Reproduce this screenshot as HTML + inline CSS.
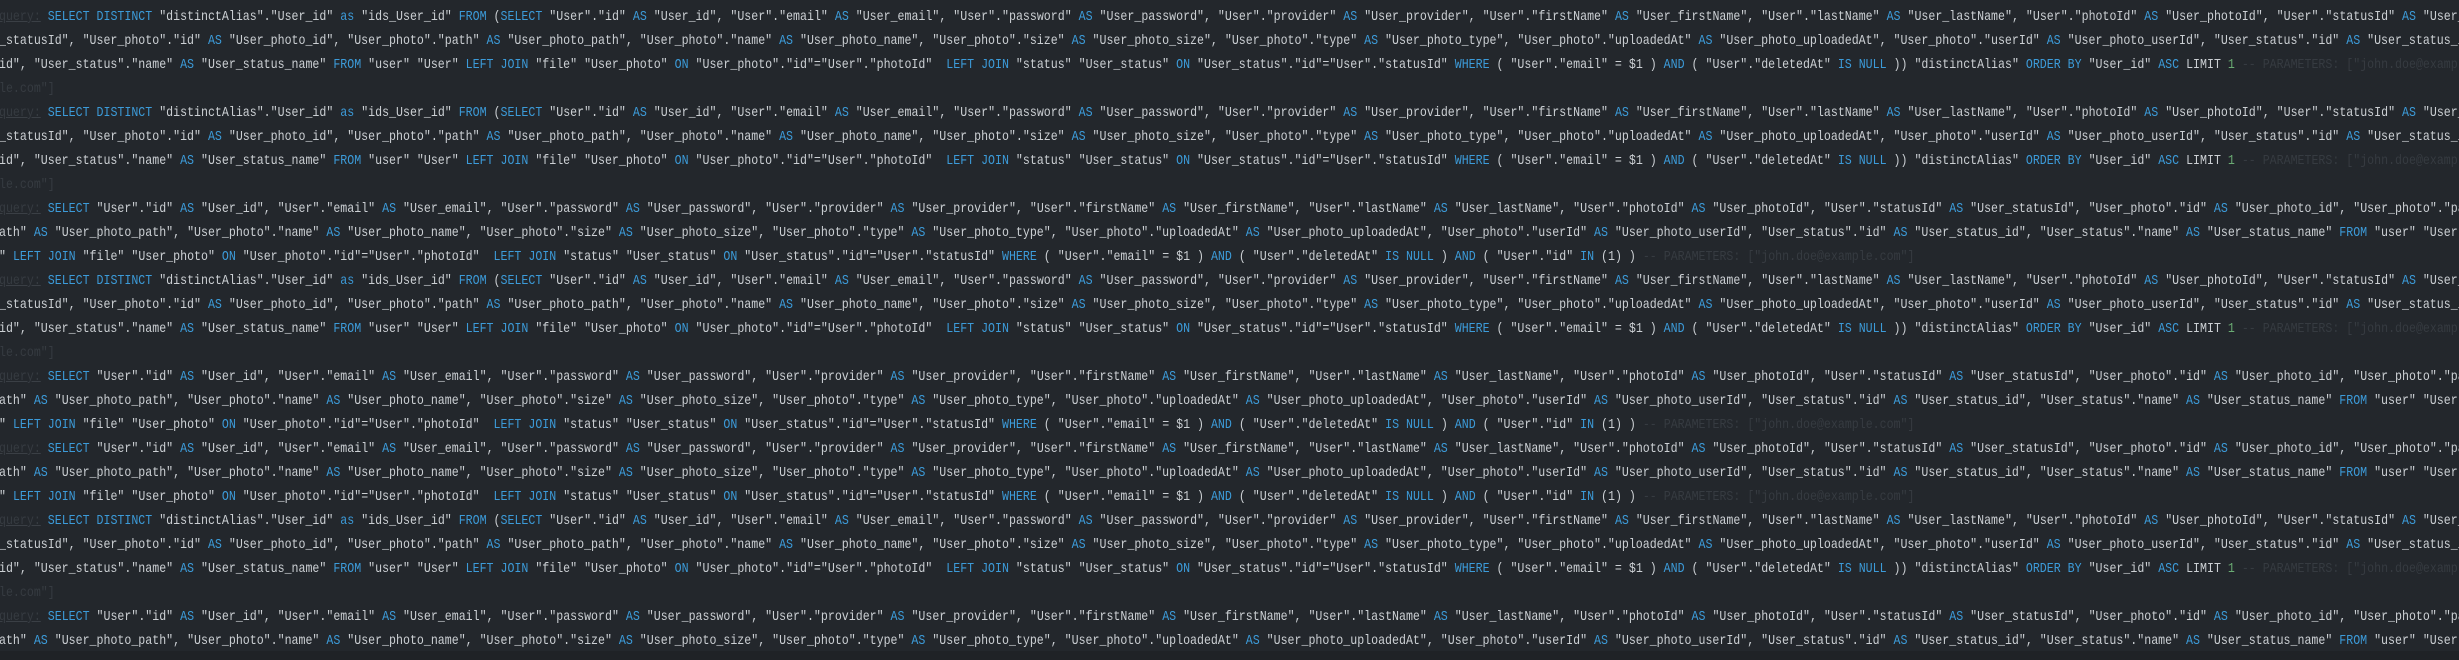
<!DOCTYPE html>
<html><head><meta charset="utf-8"><style>
html,body{margin:0;padding:0;background:#23272c;width:2459px;height:660px;overflow:hidden}
#w{position:absolute;left:-1px;top:5px;transform:scaleX(0.829);transform-origin:0 0;width:3400px;font-family:"Liberation Mono",monospace;font-size:14px;color:#ccd0d4}
.l{height:24px;line-height:24px;white-space:pre;overflow:hidden}
b{font-weight:normal;color:#3c9bd9}
i{font-style:normal;color:#363b41}
u{text-decoration:none;color:#6aab73}
.q{text-decoration:underline;text-decoration-color:#3a3f45}
#bar{position:absolute;left:0;top:651px;width:2459px;height:9px;background:#1f2226}
</style></head><body><div id="w">
<div class="l"><i class="q">query:</i> <b>SELECT DISTINCT</b> "distinctAlias"."User_id" <b>as</b> "ids_User_id" <b>FROM</b> (<b>SELECT</b> "User"."id" <b>AS</b> "User_id", "User"."email" <b>AS</b> "User_email", "User"."password" <b>AS</b> "User_password", "User"."provider" <b>AS</b> "User_provider", "User"."firstName" <b>AS</b> "User_firstName", "User"."lastName" <b>AS</b> "User_lastName", "User"."photoId" <b>AS</b> "User_photoId", "User"."statusId" <b>AS</b> "User_statusId"</div>
<div class="l">_statusId", "User_photo"."id" <b>AS</b> "User_photo_id", "User_photo"."path" <b>AS</b> "User_photo_path", "User_photo"."name" <b>AS</b> "User_photo_name", "User_photo"."size" <b>AS</b> "User_photo_size", "User_photo"."type" <b>AS</b> "User_photo_type", "User_photo"."uploadedAt" <b>AS</b> "User_photo_uploadedAt", "User_photo"."userId" <b>AS</b> "User_photo_userId", "User_status"."id" <b>AS</b> "User_status_id"</div>
<div class="l">id", "User_status"."name" <b>AS</b> "User_status_name" <b>FROM</b> "user" "User" <b>LEFT JOIN</b> "file" "User_photo" <b>ON</b> "User_photo"."id"="User"."photoId"  <b>LEFT JOIN</b> "status" "User_status" <b>ON</b> "User_status"."id"="User"."statusId" <b>WHERE</b> ( "User"."email" = $1 ) <b>AND</b> ( "User"."deletedAt" <b>IS NULL</b> )) "distinctAlias" <b>ORDER BY</b> "User_id" <b>ASC</b> LIMIT <u>1</u> <i>-- PARAMETERS: ["john.doe@example.com"]</i></div>
<div class="l"><i>le.com"]</i></div>
<div class="l"><i class="q">query:</i> <b>SELECT DISTINCT</b> "distinctAlias"."User_id" <b>as</b> "ids_User_id" <b>FROM</b> (<b>SELECT</b> "User"."id" <b>AS</b> "User_id", "User"."email" <b>AS</b> "User_email", "User"."password" <b>AS</b> "User_password", "User"."provider" <b>AS</b> "User_provider", "User"."firstName" <b>AS</b> "User_firstName", "User"."lastName" <b>AS</b> "User_lastName", "User"."photoId" <b>AS</b> "User_photoId", "User"."statusId" <b>AS</b> "User_statusId"</div>
<div class="l">_statusId", "User_photo"."id" <b>AS</b> "User_photo_id", "User_photo"."path" <b>AS</b> "User_photo_path", "User_photo"."name" <b>AS</b> "User_photo_name", "User_photo"."size" <b>AS</b> "User_photo_size", "User_photo"."type" <b>AS</b> "User_photo_type", "User_photo"."uploadedAt" <b>AS</b> "User_photo_uploadedAt", "User_photo"."userId" <b>AS</b> "User_photo_userId", "User_status"."id" <b>AS</b> "User_status_id"</div>
<div class="l">id", "User_status"."name" <b>AS</b> "User_status_name" <b>FROM</b> "user" "User" <b>LEFT JOIN</b> "file" "User_photo" <b>ON</b> "User_photo"."id"="User"."photoId"  <b>LEFT JOIN</b> "status" "User_status" <b>ON</b> "User_status"."id"="User"."statusId" <b>WHERE</b> ( "User"."email" = $1 ) <b>AND</b> ( "User"."deletedAt" <b>IS NULL</b> )) "distinctAlias" <b>ORDER BY</b> "User_id" <b>ASC</b> LIMIT <u>1</u> <i>-- PARAMETERS: ["john.doe@example.com"]</i></div>
<div class="l"><i>le.com"]</i></div>
<div class="l"><i class="q">query:</i> <b>SELECT</b> "User"."id" <b>AS</b> "User_id", "User"."email" <b>AS</b> "User_email", "User"."password" <b>AS</b> "User_password", "User"."provider" <b>AS</b> "User_provider", "User"."firstName" <b>AS</b> "User_firstName", "User"."lastName" <b>AS</b> "User_lastName", "User"."photoId" <b>AS</b> "User_photoId", "User"."statusId" <b>AS</b> "User_statusId", "User_photo"."id" <b>AS</b> "User_photo_id", "User_photo"."path"</div>
<div class="l">ath" <b>AS</b> "User_photo_path", "User_photo"."name" <b>AS</b> "User_photo_name", "User_photo"."size" <b>AS</b> "User_photo_size", "User_photo"."type" <b>AS</b> "User_photo_type", "User_photo"."uploadedAt" <b>AS</b> "User_photo_uploadedAt", "User_photo"."userId" <b>AS</b> "User_photo_userId", "User_status"."id" <b>AS</b> "User_status_id", "User_status"."name" <b>AS</b> "User_status_name" <b>FROM</b> "user" "User"</div>
<div class="l">" <b>LEFT JOIN</b> "file" "User_photo" <b>ON</b> "User_photo"."id"="User"."photoId"  <b>LEFT JOIN</b> "status" "User_status" <b>ON</b> "User_status"."id"="User"."statusId" <b>WHERE</b> ( "User"."email" = $1 ) <b>AND</b> ( "User"."deletedAt" <b>IS NULL</b> ) <b>AND</b> ( "User"."id" <b>IN</b> (1) ) <i>-- PARAMETERS: ["john.doe@example.com"]</i></div>
<div class="l"><i class="q">query:</i> <b>SELECT DISTINCT</b> "distinctAlias"."User_id" <b>as</b> "ids_User_id" <b>FROM</b> (<b>SELECT</b> "User"."id" <b>AS</b> "User_id", "User"."email" <b>AS</b> "User_email", "User"."password" <b>AS</b> "User_password", "User"."provider" <b>AS</b> "User_provider", "User"."firstName" <b>AS</b> "User_firstName", "User"."lastName" <b>AS</b> "User_lastName", "User"."photoId" <b>AS</b> "User_photoId", "User"."statusId" <b>AS</b> "User_statusId"</div>
<div class="l">_statusId", "User_photo"."id" <b>AS</b> "User_photo_id", "User_photo"."path" <b>AS</b> "User_photo_path", "User_photo"."name" <b>AS</b> "User_photo_name", "User_photo"."size" <b>AS</b> "User_photo_size", "User_photo"."type" <b>AS</b> "User_photo_type", "User_photo"."uploadedAt" <b>AS</b> "User_photo_uploadedAt", "User_photo"."userId" <b>AS</b> "User_photo_userId", "User_status"."id" <b>AS</b> "User_status_id"</div>
<div class="l">id", "User_status"."name" <b>AS</b> "User_status_name" <b>FROM</b> "user" "User" <b>LEFT JOIN</b> "file" "User_photo" <b>ON</b> "User_photo"."id"="User"."photoId"  <b>LEFT JOIN</b> "status" "User_status" <b>ON</b> "User_status"."id"="User"."statusId" <b>WHERE</b> ( "User"."email" = $1 ) <b>AND</b> ( "User"."deletedAt" <b>IS NULL</b> )) "distinctAlias" <b>ORDER BY</b> "User_id" <b>ASC</b> LIMIT <u>1</u> <i>-- PARAMETERS: ["john.doe@example.com"]</i></div>
<div class="l"><i>le.com"]</i></div>
<div class="l"><i class="q">query:</i> <b>SELECT</b> "User"."id" <b>AS</b> "User_id", "User"."email" <b>AS</b> "User_email", "User"."password" <b>AS</b> "User_password", "User"."provider" <b>AS</b> "User_provider", "User"."firstName" <b>AS</b> "User_firstName", "User"."lastName" <b>AS</b> "User_lastName", "User"."photoId" <b>AS</b> "User_photoId", "User"."statusId" <b>AS</b> "User_statusId", "User_photo"."id" <b>AS</b> "User_photo_id", "User_photo"."path"</div>
<div class="l">ath" <b>AS</b> "User_photo_path", "User_photo"."name" <b>AS</b> "User_photo_name", "User_photo"."size" <b>AS</b> "User_photo_size", "User_photo"."type" <b>AS</b> "User_photo_type", "User_photo"."uploadedAt" <b>AS</b> "User_photo_uploadedAt", "User_photo"."userId" <b>AS</b> "User_photo_userId", "User_status"."id" <b>AS</b> "User_status_id", "User_status"."name" <b>AS</b> "User_status_name" <b>FROM</b> "user" "User"</div>
<div class="l">" <b>LEFT JOIN</b> "file" "User_photo" <b>ON</b> "User_photo"."id"="User"."photoId"  <b>LEFT JOIN</b> "status" "User_status" <b>ON</b> "User_status"."id"="User"."statusId" <b>WHERE</b> ( "User"."email" = $1 ) <b>AND</b> ( "User"."deletedAt" <b>IS NULL</b> ) <b>AND</b> ( "User"."id" <b>IN</b> (1) ) <i>-- PARAMETERS: ["john.doe@example.com"]</i></div>
<div class="l"><i class="q">query:</i> <b>SELECT</b> "User"."id" <b>AS</b> "User_id", "User"."email" <b>AS</b> "User_email", "User"."password" <b>AS</b> "User_password", "User"."provider" <b>AS</b> "User_provider", "User"."firstName" <b>AS</b> "User_firstName", "User"."lastName" <b>AS</b> "User_lastName", "User"."photoId" <b>AS</b> "User_photoId", "User"."statusId" <b>AS</b> "User_statusId", "User_photo"."id" <b>AS</b> "User_photo_id", "User_photo"."path"</div>
<div class="l">ath" <b>AS</b> "User_photo_path", "User_photo"."name" <b>AS</b> "User_photo_name", "User_photo"."size" <b>AS</b> "User_photo_size", "User_photo"."type" <b>AS</b> "User_photo_type", "User_photo"."uploadedAt" <b>AS</b> "User_photo_uploadedAt", "User_photo"."userId" <b>AS</b> "User_photo_userId", "User_status"."id" <b>AS</b> "User_status_id", "User_status"."name" <b>AS</b> "User_status_name" <b>FROM</b> "user" "User"</div>
<div class="l">" <b>LEFT JOIN</b> "file" "User_photo" <b>ON</b> "User_photo"."id"="User"."photoId"  <b>LEFT JOIN</b> "status" "User_status" <b>ON</b> "User_status"."id"="User"."statusId" <b>WHERE</b> ( "User"."email" = $1 ) <b>AND</b> ( "User"."deletedAt" <b>IS NULL</b> ) <b>AND</b> ( "User"."id" <b>IN</b> (1) ) <i>-- PARAMETERS: ["john.doe@example.com"]</i></div>
<div class="l"><i class="q">query:</i> <b>SELECT DISTINCT</b> "distinctAlias"."User_id" <b>as</b> "ids_User_id" <b>FROM</b> (<b>SELECT</b> "User"."id" <b>AS</b> "User_id", "User"."email" <b>AS</b> "User_email", "User"."password" <b>AS</b> "User_password", "User"."provider" <b>AS</b> "User_provider", "User"."firstName" <b>AS</b> "User_firstName", "User"."lastName" <b>AS</b> "User_lastName", "User"."photoId" <b>AS</b> "User_photoId", "User"."statusId" <b>AS</b> "User_statusId"</div>
<div class="l">_statusId", "User_photo"."id" <b>AS</b> "User_photo_id", "User_photo"."path" <b>AS</b> "User_photo_path", "User_photo"."name" <b>AS</b> "User_photo_name", "User_photo"."size" <b>AS</b> "User_photo_size", "User_photo"."type" <b>AS</b> "User_photo_type", "User_photo"."uploadedAt" <b>AS</b> "User_photo_uploadedAt", "User_photo"."userId" <b>AS</b> "User_photo_userId", "User_status"."id" <b>AS</b> "User_status_id"</div>
<div class="l">id", "User_status"."name" <b>AS</b> "User_status_name" <b>FROM</b> "user" "User" <b>LEFT JOIN</b> "file" "User_photo" <b>ON</b> "User_photo"."id"="User"."photoId"  <b>LEFT JOIN</b> "status" "User_status" <b>ON</b> "User_status"."id"="User"."statusId" <b>WHERE</b> ( "User"."email" = $1 ) <b>AND</b> ( "User"."deletedAt" <b>IS NULL</b> )) "distinctAlias" <b>ORDER BY</b> "User_id" <b>ASC</b> LIMIT <u>1</u> <i>-- PARAMETERS: ["john.doe@example.com"]</i></div>
<div class="l"><i>le.com"]</i></div>
<div class="l"><i class="q">query:</i> <b>SELECT</b> "User"."id" <b>AS</b> "User_id", "User"."email" <b>AS</b> "User_email", "User"."password" <b>AS</b> "User_password", "User"."provider" <b>AS</b> "User_provider", "User"."firstName" <b>AS</b> "User_firstName", "User"."lastName" <b>AS</b> "User_lastName", "User"."photoId" <b>AS</b> "User_photoId", "User"."statusId" <b>AS</b> "User_statusId", "User_photo"."id" <b>AS</b> "User_photo_id", "User_photo"."path"</div>
<div class="l">ath" <b>AS</b> "User_photo_path", "User_photo"."name" <b>AS</b> "User_photo_name", "User_photo"."size" <b>AS</b> "User_photo_size", "User_photo"."type" <b>AS</b> "User_photo_type", "User_photo"."uploadedAt" <b>AS</b> "User_photo_uploadedAt", "User_photo"."userId" <b>AS</b> "User_photo_userId", "User_status"."id" <b>AS</b> "User_status_id", "User_status"."name" <b>AS</b> "User_status_name" <b>FROM</b> "user" "User"</div>
</div>
<div id="bar"></div>
</body></html>
